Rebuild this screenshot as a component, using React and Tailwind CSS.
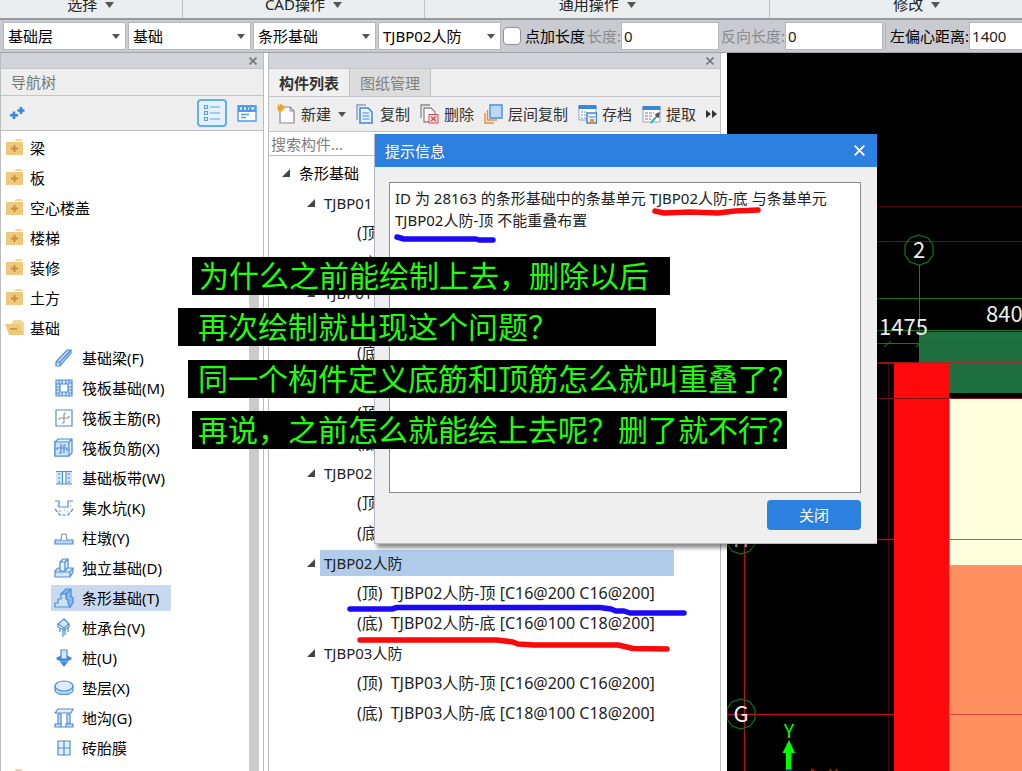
import { useState } from 'react';

const icons = {
  beam: (
    <>
      <path d="M2 14 L13 2 L17 2 L17 5 L6 18 L2 18 Z" fill="#c6dcf5" />
      <path d="M2 14 L6 14 L6 18 M6 14 L17 2" />
    </>
  ),
  raft: (
    <>
      <path d="M2 2 H18 V18 H2 Z" fill="#d5e6f9" />
      <path d="M6 6 H14 V14 H6 Z" fill="#fff" />
      <path d="M2 6 H5 V2 M8 2 V6 M12 2 V6 M15 2 V5 H18 M2 9 H6 M14 9 H18 M2 12 H6 M14 12 H18 M2 15 H5 V18 M8 14 V18 M12 14 V18 M15 18 V15 H18" />
    </>
  ),
  mainBar: (
    <>
      <path d="M2 2 H18 V18 H2 Z" fill="#fff" />
      <path d="M10 15 V7 Q10 5 12 5 M5 12 Q5 10 7 10 H13 Q15 10 15 8 M10 15 H8" stroke="#8a97a5" />
    </>
  ),
  negBar: (
    <>
      <path d="M1 4 L4 1 H18 V15 L15 18 H1 Z M15 4 L18 1" fill="#e6f0fc" />
      <path d="M1 4 H15 V18 H1 Z" fill="#cfe1f7" />
      <path d="M7 6 V15 H5 M10 15 V7 H12 M3 12 V10 H13 V13" />
    </>
  ),
  strip: (
    <>
      <path d="M2 4 H8 V16 H2 Z M12 4 H18 V16 H12 Z" fill="#d5e6f9" stroke="none" />
      <path d="M2 3.500 H18 M2 16 H18 M8.500 3 V16 M12 3 V16" />
      <path d="M5 5 V15 M15 5 V15" strokeDasharray="2 2" />
    </>
  ),
  pit: (
    <>
      <path d="M1 3 H5 V9 H14 V3 H19" />
      <path d="M1 11 L6 17 H14 L19 11" strokeDasharray="4 1" />
      <path d="M3 8 H4 M5 13 H7 M10 12 H11 M13 14 H14 M16 8 H17" stroke="#8a97a5" />
    </>
  ),
  pier: (
    <>
      <path d="M1 12 H19 V16 H1 Z" fill="#b9d5f5" />
      <path d="M7 12 L8 6 H12 L13 12" stroke="#8a97a5" fill="#fff" />
    </>
  ),
  isolated: (
    <>
      <path d="M1 13 L4 10 H19 V14 L16 19 H1 Z M1 14 H16 V19 M16 14 L19 10" fill="#d5e6f9" />
      <path d="M6 4 L9 1 H14 V9 L11 13 H6 Z M6 4 H11 V13 M11 4 L14 1" fill="#e6f0fc" />
    </>
  ),
  stripFooting: (
    <>
      <path d="M7 6 L12 1 H17 V8 L19 10 V15 L16 19 L12 12 V6 Z" fill="#8ab8ec" />
      <path d="M1 19 V15 H4 V11 H7 V6 H12 V11 L14 12 V15 L16 19 Z M12 6 L17 1" fill="#cfe1f7" />
    </>
  ),
  cap: (
    <>
      <path d="M10 1 L15 6 L10 10 L4 6 Z" fill="#d5e6f9" />
      <path d="M4 6 V9 L10 12 L15 9 V6 M10 10 V12" />
      <path d="M6 10 V14 M9 12 V19 M11 12 V17 M14 10 V14" />
    </>
  ),
  pile: (
    <>
      <path d="M3 10 L7 8 H13 L17 10 V11 L13 13 H7 L3 11 Z" fill="#3f86d9" />
      <path d="M7 2 H13 V11 H7 Z" fill="#d5e6f9" />
      <path d="M7 14 H13 L10 18 Z" fill="#3f86d9" />
    </>
  ),
  cushion: (
    <>
      <path d="M1 8 V12 C1 18 19 18 19 12 V8" fill="#b9d5f5" />
      <ellipse cx="10" cy="8" rx="9" ry="5" fill="#dfecfb" />
    </>
  ),
  trench: (
    <>
      <path d="M1 5 L4 1 H19 L17 5 Z" fill="#e6f0fc" />
      <path d="M4 6 H7 V16 H4 Z M13 6 H16 V16 H13 Z" fill="#cfe1f7" />
      <path d="M1 19 V16 H7 V19 Z M12 19 V16 H19 V19 Z M7 19 H12" fill="#cfe1f7" />
    </>
  ),
  brick: (
    <>
      <path d="M4 3 H16 V17 H4 Z" fill="#e6f0fc" />
      <path d="M10 3 V17 M4 10 H16" />
    </>
  ),
};

const folders = ['梁', '板', '空心楼盖', '楼梯', '装修', '土方'];

const foundationItems = [
  { label: '基础梁(F)', icon: 'beam' },
  { label: '筏板基础(M)', icon: 'raft' },
  { label: '筏板主筋(R)', icon: 'mainBar' },
  { label: '筏板负筋(X)', icon: 'negBar' },
  { label: '基础板带(W)', icon: 'strip' },
  { label: '集水坑(K)', icon: 'pit' },
  { label: '柱墩(Y)', icon: 'pier' },
  { label: '独立基础(D)', icon: 'isolated' },
  { label: '条形基础(T)', icon: 'stripFooting', active: true },
  { label: '桩承台(V)', icon: 'cap' },
  { label: '桩(U)', icon: 'pile' },
  { label: '垫层(X)', icon: 'cushion' },
  { label: '地沟(G)', icon: 'trench' },
  { label: '砖胎膜', icon: 'brick' },
];

const components = [
  { name: 'TJBP01' },
  { name: 'TJBP01' },
  { name: 'TJBP02' },
  { name: 'TJBP02' },
  { name: 'TJBP02人防', top: 'C16@200 C16@200', bottom: 'C16@100 C18@200', active: true },
  { name: 'TJBP03人防', top: 'C16@200 C16@200', bottom: 'C18@100 C18@200' },
];

const message = 'ID 为 28163 的条形基础中的条基单元 TJBP02人防-底 与条基单元\nTJBP02人防-顶 不能重叠布置';

function Caret({ className = '' }) {
  return (
    <svg width="8" height="5" viewBox="0 0 8 5" className={`shrink-0 ${className}`}>
      <path d="M0 0 H8 L4 5 Z" fill="#555" />
    </svg>
  );
}

function CloseIcon({ size = 8, color = '#777', width = 1.6 }) {
  return (
    <svg width={size} height={size} viewBox="0 0 8 8">
      <path d="M0.5 0.5 L7.5 7.5 M7.5 0.5 L0.5 7.5" stroke={color} strokeWidth={width} />
    </svg>
  );
}

function RibbonGroup({ label, className }) {
  return (
    <div className={`flex items-end justify-center gap-2 pb-1 ${className}`}>
      <span className="leading-5">{label}</span>
      <svg width="9" height="6" viewBox="0 0 9 6" className="mb-1.5">
        <path d="M0 0 H9 L4.5 6 Z" fill="#555" />
      </svg>
    </div>
  );
}

function Dropdown({ label, value }) {
  return (
    <div className="relative w-[123px] h-7 shrink-0">
      <select
        aria-label={label}
        defaultValue={value}
        className="appearance-none w-full h-full bg-white border border-[#b4b7bd] pl-1 text-black outline-none"
      >
        <option>{value}</option>
      </select>
      <Caret className="absolute right-1.5 top-3 pointer-events-none" />
    </div>
  );
}

function Field({ id, label, value, muted, className = '' }) {
  return (
    <div className={`flex items-center shrink-0 ${className}`}>
      <label htmlFor={id} className={muted ? 'text-[#8a8c90]' : 'text-black'}>
        {label}
      </label>
      <input
        id={id}
        defaultValue={value}
        className="w-[98px] h-7 bg-white border border-[#b4b7bd] px-0.5 text-[#222] outline-none"
      />
    </div>
  );
}

function FolderIcon({ open }) {
  return open ? (
    <svg width="20" height="18" viewBox="0 0 20 18">
      <path d="M7 3 L9 1 H16 L18 3 H19 V15 H4 Z" fill="#f3d79a" />
      <path d="M0 5 H15 L19 16 H4 Z" fill="#eec87d" />
      <path d="M5 10 H12" stroke="#c98f3c" strokeWidth="1.6" />
    </svg>
  ) : (
    <svg width="20" height="18" viewBox="0 0 20 18">
      <path d="M9 2 L11 0 H16 L18 2 H9 Z" fill="#f3d79a" />
      <path d="M1 3 H18 V16 H1 Z" fill="#eec87d" />
      <path d="M9.5 6 V13 M6 9.5 H13" stroke="#c98f3c" strokeWidth="2" />
    </svg>
  );
}

function NavPanel() {
  return (
    <aside className="w-[264px] shrink-0 flex flex-col border-x border-[#b9bcc1] bg-white">
      <div className="h-4 shrink-0 flex items-center justify-end pr-1.5 bg-[#d2d4da] border-b border-[#c3c5ca]">
        <button aria-label="关闭导航树"><CloseIcon /></button>
      </div>
      <h2 className="h-[27px] shrink-0 flex items-center pl-2.5 bg-[#eee] border-b border-[#c3c5ca] text-[#777]">导航树</h2>
      <div className="h-[35px] shrink-0 flex items-center pl-2 pr-1.5 bg-[#eee] border-b border-[#b9bcc1]">
        <button aria-label="添加">
          <svg width="16" height="14" viewBox="0 0 16 14" stroke="#3a86dc" strokeWidth="2.6">
            <path d="M5 5.5 V13 M1 9.2 H9 M12 1 V8 M8.5 4.5 H15.5" />
          </svg>
        </button>
        <button aria-label="列表" className="ml-auto w-[30px] h-7 flex items-center justify-center rounded border-2 border-[#62aef7] bg-[#e6f2ff]">
          <svg width="18" height="18" viewBox="0 0 18 18" fill="none" stroke="#5a9fe8" strokeWidth="1.2">
            <path d="M1.5 1.5 H4.5 V4.5 H1.5 Z M1.5 7.5 H4.5 V10.5 H1.5 Z M1.5 13.5 H4.5 V16.5 H1.5 Z M7 3 H17 M7 9 H17 M7 15 H17" />
          </svg>
        </button>
        <button aria-label="详情" className="ml-2.5">
          <svg width="20" height="17" viewBox="0 0 20 17">
            <path d="M1 1 H19 V16 H1 Z" fill="#fff" stroke="#4c9cf0" strokeWidth="1.4" />
            <path d="M1 0 H19 V7 H1 Z" fill="#4c9cf0" />
            <path d="M3 3.5 H5 M7 3.5 H9 M11 3.5 H12" stroke="#fff" strokeWidth="2" />
            <path d="M13.5 2.5 H18 L15.7 5 Z" fill="#fff" />
            <path d="M4 9.5 H12 M4 12.5 H9" stroke="#4c9cf0" strokeWidth="1.4" />
          </svg>
        </button>
      </div>
      <div className="flex-1 min-h-0 flex overflow-hidden">
        <ul className="flex-1 pt-0.5">
          {folders.map((name) => (
            <li key={name} className="h-[30px] flex items-center gap-[5px] pl-1">
              <FolderIcon />
              <span>{name}</span>
            </li>
          ))}
          <li>
            <div className="h-[30px] flex items-center gap-[5px] pl-1">
              <FolderIcon open />
              <span>基础</span>
            </div>
            <ul className="pl-[50px]">
              {foundationItems.map((item) => (
                <li key={item.label} className="h-[30px] flex items-center">
                  <button className={`h-[26px] flex items-center gap-2 pl-[3px] pr-3 ${item.active ? 'bg-[#c9daf0]' : ''}`}>
                    <svg width="20" height="20" viewBox="0 0 20 20" fill="none" stroke="#4a8edb" strokeWidth="1.2">
                      {icons[item.icon]}
                    </svg>
                    <span>{item.label}</span>
                  </button>
                </li>
              ))}
            </ul>
          </li>
          <li className="h-[30px] flex items-center gap-[5px] pl-1">
            <FolderIcon />
          </li>
        </ul>
        <div className="w-3.5 pt-[135px] flex flex-col">
          <div className="flex-1 w-2.5 bg-[#cbcbcb]" />
        </div>
      </div>
    </aside>
  );
}

function ToolButton({ label, children }) {
  return (
    <button className="flex items-center gap-[5px] shrink-0">
      <svg width="19" height="20" viewBox="0 0 19 20" fill="none">
        {children}
      </svg>
      <span>{label}</span>
    </button>
  );
}

function Expander() {
  return (
    <svg width="8" height="8" viewBox="0 0 8 8" className="shrink-0">
      <path d="M8 0 V8 H0 Z" fill="#444" />
    </svg>
  );
}

function BarRow({ side, name, bars }) {
  return (
    <div className="h-[30px] flex items-center gap-2 pl-[88px] text-base leading-5">
      <span>({side})</span>
      {bars && <span>{name}-{side} [{bars}]</span>}
    </div>
  );
}

function ComponentPanel() {
  return (
    <section className="w-[453px] shrink-0 flex flex-col border-x border-[#b9bcc1] bg-white">
      <div className="h-4 shrink-0 flex items-center justify-end pr-1.5 bg-[#d2d4da] border-b border-[#c3c5ca]">
        <button aria-label="关闭构件列表"><CloseIcon /></button>
      </div>
      <div role="tablist" className="h-7 shrink-0 flex bg-[#eee] border-b border-[#c3c5ca]">
        <button role="tab" aria-selected="true" className="px-2.5 font-bold text-[#333] bg-[#f0f0f0]">构件列表</button>
        <button role="tab" aria-selected="false" className="px-2.5 text-[#808080] bg-[#dcdcdc] border-x border-[#c3c5ca]">图纸管理</button>
      </div>
      <div className="h-[35px] shrink-0 flex items-center gap-2.5 pl-2 pr-1 bg-[#eee] border-b border-[#c3c5ca] text-[#333] overflow-hidden">
        <button className="flex items-center gap-[5px] shrink-0">
          <svg width="19" height="20" viewBox="0 0 19 20" fill="none">
            <path d="M3 3 H13 L17 7 V19 H3 Z" fill="#fafafa" stroke="#8a8a8a" strokeWidth="1.2" />
            <path d="M13 3 V7 H17" stroke="#8a8a8a" />
            <path d="M3.5 0 V8 M0 4 H8 M1 1 L6 6.5 M6 1 L1 6.5" stroke="#f59a23" strokeWidth="1.4" />
          </svg>
          <span>新建</span>
          <Caret className="ml-0.5" />
        </button>
        <ToolButton label="复制">
          <path d="M1 16 V1 H10" stroke="#7aa3cf" strokeWidth="1.4" />
          <path d="M4 4 H12 L16 8 V19 H4 Z" fill="#eaf3fd" stroke="#3f86d9" strokeWidth="1.5" />
          <path d="M6.5 9 H13 M6.5 12 H13.5 M6.5 15 H13.5" stroke="#3f86d9" />
        </ToolButton>
        <ToolButton label="删除">
          <path d="M1 14 V1 H10" stroke="#8a8a8a" strokeWidth="1.3" />
          <path d="M4 4 H11 L15 8 V18 H4 Z" fill="#fafafa" stroke="#8a8a8a" strokeWidth="1.3" />
          <path d="M9 10.500 H18 V19 H9 Z" fill="#fbe3e3" stroke="#d9444a" />
          <path d="M11 12.500 L16 17 M16 12.500 L11 17" stroke="#d9444a" strokeWidth="1.5" />
        </ToolButton>
        <ToolButton label="层间复制">
          <path d="M1 9 V19 H10 M3.500 6 V16 H13" stroke="#f08a3c" strokeWidth="1.4" />
          <path d="M6 1 H18 V14 H6 Z" fill="#b9d9fb" stroke="#4a8edb" strokeWidth="1.4" />
        </ToolButton>
        <ToolButton label="存档">
          <path d="M1 2 H18 V16 H1 Z" fill="#fff" stroke="#8aa5c2" />
          <path d="M0.500 1 H18.500 V5 H0.500 Z" fill="#3f86d9" />
          <path d="M3 8 H9 M3 11 H8 M3 14 H8" stroke="#6f8fb0" strokeDasharray="2 1" />
          <path d="M9 9 H18.500 V19 H9 Z" fill="#eaf3fd" stroke="#3f86d9" strokeWidth="1.5" />
          <path d="M11 13 H17" stroke="#3f86d9" />
          <path d="M12 15 H16 V19 H12 Z" fill="#f08a3c" />
        </ToolButton>
        <ToolButton label="提取">
          <path d="M1 3 H18 V18 H1 Z" fill="#fff" stroke="#8aa5c2" />
          <path d="M0.500 2 H18.500 V6 H0.500 Z" fill="#3f86d9" />
          <path d="M3 9 H12 M3 12 H11 M3 15 H9" stroke="#777" strokeDasharray="3 1" />
          <path d="M9 19 L14 13" stroke="#3bb0b8" strokeWidth="2" />
          <path d="M13 10 L18 8 L17 14 L14 13 Z" fill="#555" />
        </ToolButton>
        <button aria-label="更多" className="shrink-0">
          <svg width="11" height="8" viewBox="0 0 11 8" fill="#333">
            <path d="M0 0 L5 4 L0 8 Z M6 0 L11 4 L6 8 Z" />
          </svg>
        </button>
      </div>
      <input
        aria-label="搜索构件"
        placeholder="搜索构件..."
        className="h-6 shrink-0 w-full px-0.5 border-b border-[#b9bcc1] placeholder:text-[#808080] outline-none"
      />
      <ul className="flex-1 min-h-0 overflow-hidden pt-0.5 text-[#222]">
        <li>
          <div className="h-[30px] flex items-center gap-[9px] pl-[13px]">
            <Expander />
            <span className="text-black">条形基础</span>
          </div>
          <ul>
            {components.map((item, i) => (
              <li key={i}>
                <div className="h-[30px] flex items-center gap-[5px] pl-[38px] pr-[46px]">
                  <Expander />
                  <span className={`flex-1 h-[26px] leading-[26px] pl-1 ${item.active ? 'bg-[#b1cbeb]' : ''}`}>{item.name}</span>
                </div>
                <BarRow side="顶" name={item.name} bars={item.top} />
                <BarRow side="底" name={item.name} bars={item.bottom} />
              </li>
            ))}
          </ul>
        </li>
      </ul>
    </section>
  );
}

// Axis bubble: a ten sided ring with its grid name inside
function AxisBubble({ x, y, name }) {
  return (
    <g transform={`translate(${x} ${y})`}>
      <path d="M0 -15 L9 -12 L14 -5 L14 5 L9 12 L0 15 L-9 12 L-14 5 L-14 -5 L-9 -12 Z" fill="none" stroke="#0a7a12" strokeWidth="1.2" />
      <text y="8" textAnchor="middle" fill="#eee" fontSize="22">{name}</text>
    </g>
  );
}

function DrawingCanvas() {
  return (
    <main className="flex-1 min-w-0 bg-black overflow-hidden">
      <svg className="w-full h-full font-['Noto_Sans_CJK_SC',sans-serif]">
        <g transform="translate(-727 -53)">
          <path d="M727 206.500 H2000" stroke="#5a0508" />
          <path d="M727 241.500 H2000" stroke="#7a0a0c" />
          <rect x="919" y="332" width="1100" height="31" fill="#1f7040" />
          <rect x="949" y="363" width="1100" height="30" fill="#1f7040" />
          <rect x="949" y="399" width="1100" height="166" fill="#ffffdd" />
          <rect x="949" y="565" width="1100" height="1000" fill="#ff9060" />
          <path d="M727 298.500 H2000 M727 330.500 H2000 M727 343.500 H2000" stroke="#0b7b14" />
          <path d="M919.500 265 V362" stroke="#0a8a12" />
          <path d="M884 347 L891 341 M916 347 L922 341" stroke="#0a8a12" />
          <path d="M888.500 363 V2000" stroke="#4a0508" />
          <rect x="894" y="363" width="55" height="1500" fill="#ff0a0c" />
          <path d="M919.500 363 V2000" stroke="#f40a0c" />
          <path d="M727 363 H2000" stroke="#c8191c" strokeWidth="1.500" />
          <path d="M727 398.500 H2000" stroke="#7a1512" />
          <path d="M727 539.500 H894 M727 714.500 H894 M744.500 363 V2000" stroke="#b81216" strokeWidth="1.400" />
          <path d="M949 539.500 H2000 M949 714.500 H2000" stroke="#ea4438" />
          <path d="M949.500 398 V2000" stroke="#ea6a48" />
          <AxisBubble x={919} y={250} name="2" />
          <AxisBubble x={741} y={539} name="H" />
          <AxisBubble x={741} y={714} name="G" />
          <g fill="#eee" fontSize="22">
            <text x="879" y="335">1475</text>
            <text x="986" y="322">8400</text>
          </g>
          <text x="789" y="738" textAnchor="middle" fill="#0f0" fontSize="19">Y</text>
          <path d="M789 740 L795 753 H791.500 V770 H786 V753 H782.500 Z" fill="#0f0" />
          <circle cx="789" cy="773" r="4" fill="#11f" />
          <path d="M811 769 L815 772 M830.500 769 V780 M836.500 769 V780" stroke="#e00" strokeWidth="2" />
        </g>
      </svg>
    </main>
  );
}

function MessageDialog({ onClose }) {
  return (
    <div role="dialog" aria-labelledby="dialog-title" className="absolute left-[374px] top-[134px] w-[503px] bg-[#efeff0] border-b border-l border-[#b5b8c2] shadow-[3px_4px_4px_rgba(0,0,0,0.45)]">
      <div className="h-[33px] flex items-center justify-between pl-2.5 pr-3 bg-[#2b80e0] text-white">
        <h2 id="dialog-title">提示信息</h2>
        <button aria-label="关闭提示" onClick={onClose}><CloseIcon size={11} color="#fff" width={1.3} /></button>
      </div>
      <div className="pl-3.5 pr-4 pt-[15px] pb-[13px] flex flex-col items-end gap-[7px]">
        <textarea
          aria-label="提示内容"
          readOnly
          defaultValue={message}
          className="block w-full h-[311px] resize-none border border-[#8a8a8a] bg-white px-[5px] py-1 leading-[22px] text-[#222] outline-none"
        />
        <button onClick={onClose} className="w-[94px] h-[30px] rounded bg-[#2b80e0] text-white">关闭</button>
      </div>
    </div>
  );
}

function Note({ children, className }) {
  return (
    <p className={`absolute h-[38px] bg-black text-[#1fff0a] text-[30px] leading-[38px] whitespace-nowrap ${className}`}>
      {children}
    </p>
  );
}

export default function App() {
  const [open, setOpen] = useState(true);

  return (
    <div className="relative h-screen flex flex-col overflow-hidden bg-white text-[15px] leading-5 text-black font-['Noto_Sans','Noto_Sans_CJK_SC',sans-serif]">
      <header className="w-[104%] h-5 shrink-0 flex bg-[#ebeeef] border-b-2 border-[#96999d] text-[#222]">
        <RibbonGroup label="选择" className="flex-[182] border-r border-[#c0c3c6]" />
        <RibbonGroup label="CAD操作" className="flex-[242] border-r border-[#c0c3c6]" />
        <RibbonGroup label="通用操作" className="flex-[345] border-r border-[#c0c3c6]" />
        <RibbonGroup label="修改" className="flex-[293]" />
      </header>

      <div className="h-[33px] shrink-0 flex items-center gap-0.5 pl-[3px] bg-[#c9cbd0] border-b border-[#a0a2a6] overflow-hidden">
        <Dropdown label="楼层" value="基础层" />
        <Dropdown label="构件大类" value="基础" />
        <Dropdown label="构件类型" value="条形基础" />
        <Dropdown label="构件" value="TJBP02人防" />
        <label className="flex items-center gap-1 shrink-0">
          <input type="checkbox" className="appearance-none w-[18px] h-[18px] rounded-sm border border-[#8f9296] bg-white" />
          点加长度
        </label>
        <Field id="length" label="长度:" value="0" muted />
        <Field id="reverse" label="反向长度:" value="0" muted />
        <Field id="offset" label="左偏心距离:" value="1400" className="pl-1 border-l border-[#b4b7bd]" />
      </div>

      <div className="flex-1 min-h-0 flex">
        <NavPanel />
        <div className="w-1 shrink-0 bg-white" />
        <ComponentPanel />
        <div className="w-1.5 shrink-0 bg-white" />
        <DrawingCanvas />
      </div>

      {open && <MessageDialog onClose={() => setOpen(false)} />}

      {/* pen marks and notes laid over the windows */}
      <svg className="absolute inset-0 w-full h-full pointer-events-none" fill="none" strokeWidth="5.500" strokeLinecap="round" strokeLinejoin="round">
        <path d="M397 237 L404 239 H476 L479 240 H493" stroke="#1a0af5" />
        <path d="M655 211 L664 213 L690 212 L718 213 L735 211 L758 210" stroke="#fa0a0a" />
        <path d="M350 609 H392 L397 607.500 H600 L611 609 L616 611 H624 L630 613 H684" stroke="#1a0af5" />
        <path d="M360 640 H497 L513 642 L518 644 L534 645 H618 L633 648.500 L667 649" stroke="#fa0a0a" />
      </svg>
      <Note className="left-[192px] top-[257px] w-[478px] pl-[7px]">为什么之前能绘制上去，删除以后</Note>
      <Note className="left-[178px] top-[308px] w-[478px] pl-5">再次绘制就出现这个问题？</Note>
      <Note className="left-[188px] top-[360px] w-[599px] pl-2.5">同一个构件定义底筋和顶筋怎么就叫重叠了？</Note>
      <Note className="left-[192px] top-[411px] w-[595px] pl-1.5">再说，之前怎么就能绘上去呢？删了就不行？</Note>
    </div>
  );
}
